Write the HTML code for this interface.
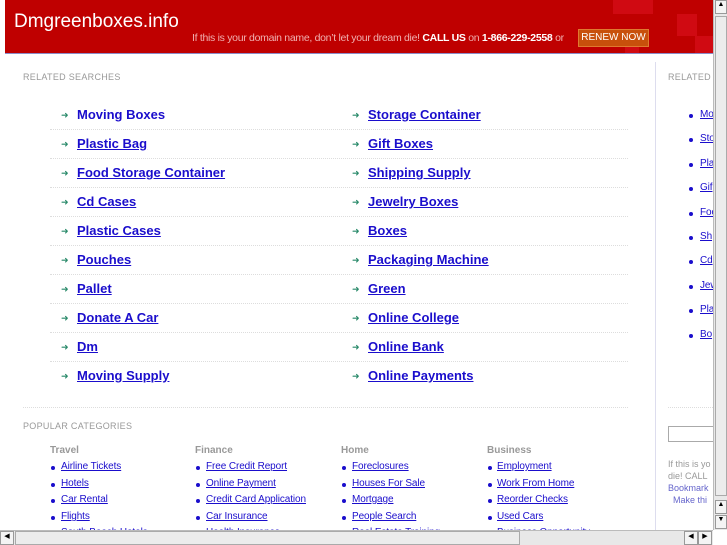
<!DOCTYPE html>
<html><head><style>
*{margin:0;padding:0;box-sizing:border-box}
body{width:727px;height:545px;overflow:hidden;background:#fff;font-family:"Liberation Sans",sans-serif;position:relative}
.hdr{position:absolute;left:5px;top:0;width:708px;height:54px;background:#bf0000;border-bottom:1px solid #8c8cc8;overflow:hidden}
.hdr .t{position:absolute;left:9px;top:11px;color:#fff;font-size:19px}
.hdr .m{position:absolute;left:187px;top:32px;color:#f0b0b0;font-size:10.5px;letter-spacing:-0.3px}
.hdr .m b{color:#fff;font-weight:bold}
.btn{position:absolute;left:573px;top:29px;width:71px;height:18px;background:#c8500c;border:1px solid #e07a30;color:#fff;font-size:10px;text-align:center;line-height:16px}
.sq{position:absolute;background:#d00a12}
.lbl{position:absolute;font-size:9px;color:#999;letter-spacing:0.3px}
.rs a{position:absolute;font-size:13px;font-weight:bold;color:#1a0dcc;text-decoration:none}
.rs a.u{text-decoration:underline}
.ar{position:absolute;color:#2a8a6a;font-size:9px}
.dot{position:absolute;left:50px;width:578px;border-top:1px dotted #ddd}
.pc h4{position:absolute;font-size:10px;color:#999;font-weight:bold}
.pc a{position:absolute;font-size:10px;color:#1a0dcc;text-decoration:underline;letter-spacing:-0.1px}
.b{position:absolute;width:4px;height:4px;border-radius:2px;background:#1a0dcc}
.vs{position:absolute;left:713px;top:0;width:14px;height:530px;background:#e8e8e8;border-left:1px solid #bbb}
.hs{position:absolute;left:0;top:530px;width:713px;height:15px;background:#e8e8e8;border-top:1px solid #bbb}
</style></head><body>
<div class="pc">
<b class="b" style="left:51px;top:532px"></b><a style="left:61px;top:527px">South Beach Hotels</a>
<b class="b" style="left:196px;top:532px"></b><a style="left:206px;top:527px">Health Insurance</a>
<b class="b" style="left:342px;top:532px"></b><a style="left:352px;top:527px">Real Estate Training</a>
<b class="b" style="left:488px;top:532px"></b><a style="left:497px;top:527px">Business Opportunity</a>
</div>
<div class="hdr">
<div class="sq" style="left:608px;top:0;width:40px;height:14px"></div>
<div class="sq" style="left:672px;top:14px;width:20px;height:22px"></div>
<div class="sq" style="left:690px;top:36px;width:18px;height:18px"></div>
<div class="sq" style="left:620px;top:44px;width:14px;height:10px"></div>
<div class="t">Dmgreenboxes.info</div>
<div class="m">If this is your domain name, don’t let your dream die! <b>CALL US</b> on <b>1-866-229-2558</b> or</div>
<div class="btn">RENEW NOW</div>
</div>
<div style="position:absolute;left:655px;top:62px;height:468px;border-left:1px solid #dde"></div>
<div class="lbl" style="left:23px;top:72px">RELATED SEARCHES</div>
<div class="lbl" style="left:668px;top:72px">RELATED</div>
<div class="rs">
<span class="ar" style="left:61px;top:110px">➜</span><a style="left:77px;top:107px">Moving Boxes</a>
<span class="ar" style="left:352px;top:110px">➜</span><a class="u" style="left:368px;top:107px">Storage Container</a>
<div class="dot" style="top:129px"></div>
<span class="ar" style="left:61px;top:139px">➜</span><a class="u" style="left:77px;top:136px">Plastic Bag</a>
<span class="ar" style="left:352px;top:139px">➜</span><a class="u" style="left:368px;top:136px">Gift Boxes</a>
<div class="dot" style="top:158px"></div>
<span class="ar" style="left:61px;top:168px">➜</span><a class="u" style="left:77px;top:165px">Food Storage Container</a>
<span class="ar" style="left:352px;top:168px">➜</span><a class="u" style="left:368px;top:165px">Shipping Supply</a>
<div class="dot" style="top:187px"></div>
<span class="ar" style="left:61px;top:197px">➜</span><a class="u" style="left:77px;top:194px">Cd Cases</a>
<span class="ar" style="left:352px;top:197px">➜</span><a class="u" style="left:368px;top:194px">Jewelry Boxes</a>
<div class="dot" style="top:216px"></div>
<span class="ar" style="left:61px;top:226px">➜</span><a class="u" style="left:77px;top:223px">Plastic Cases</a>
<span class="ar" style="left:352px;top:226px">➜</span><a class="u" style="left:368px;top:223px">Boxes</a>
<div class="dot" style="top:245px"></div>
<span class="ar" style="left:61px;top:255px">➜</span><a class="u" style="left:77px;top:252px">Pouches</a>
<span class="ar" style="left:352px;top:255px">➜</span><a class="u" style="left:368px;top:252px">Packaging Machine</a>
<div class="dot" style="top:274px"></div>
<span class="ar" style="left:61px;top:284px">➜</span><a class="u" style="left:77px;top:281px">Pallet</a>
<span class="ar" style="left:352px;top:284px">➜</span><a class="u" style="left:368px;top:281px">Green</a>
<div class="dot" style="top:303px"></div>
<span class="ar" style="left:61px;top:313px">➜</span><a class="u" style="left:77px;top:310px">Donate A Car</a>
<span class="ar" style="left:352px;top:313px">➜</span><a class="u" style="left:368px;top:310px">Online College</a>
<div class="dot" style="top:332px"></div>
<span class="ar" style="left:61px;top:342px">➜</span><a class="u" style="left:77px;top:339px">Dm</a>
<span class="ar" style="left:352px;top:342px">➜</span><a class="u" style="left:368px;top:339px">Online Bank</a>
<div class="dot" style="top:361px"></div>
<span class="ar" style="left:61px;top:371px">➜</span><a class="u" style="left:77px;top:368px">Moving Supply</a>
<span class="ar" style="left:352px;top:371px">➜</span><a class="u" style="left:368px;top:368px">Online Payments</a>
<div class="dot" style="top:407px;left:23px;width:605px"></div>
</div>
<div style="position:absolute;left:668px;top:407px;width:45px;border-top:1px dotted #ddd"></div>
<div class="pc" style="font-size:10px">
<b class="b" style="left:689px;top:114px"></b><a style="left:700px;top:109px">Mo</a>
<b class="b" style="left:689px;top:138px"></b><a style="left:700px;top:133px">Sto</a>
<b class="b" style="left:689px;top:163px"></b><a style="left:700px;top:158px">Pla</a>
<b class="b" style="left:689px;top:187px"></b><a style="left:700px;top:182px">Gif</a>
<b class="b" style="left:689px;top:212px"></b><a style="left:700px;top:207px">Foo</a>
<b class="b" style="left:689px;top:236px"></b><a style="left:700px;top:231px">Sh</a>
<b class="b" style="left:689px;top:260px"></b><a style="left:700px;top:255px">Cd</a>
<b class="b" style="left:689px;top:285px"></b><a style="left:700px;top:280px">Jew</a>
<b class="b" style="left:689px;top:309px"></b><a style="left:700px;top:304px">Pla</a>
<b class="b" style="left:689px;top:334px"></b><a style="left:700px;top:329px">Bo</a>
</div>
<div style="position:absolute;left:668px;top:426px;width:50px;height:16px;border:1px solid #aaa"></div>
<div style="position:absolute;left:668px;top:458px;font-size:9px;color:#999;line-height:12px">If this is yo<br>die! CALL<br><span style="color:#66c">Bookmark</span><br>&nbsp;&nbsp;<span style="color:#66c">Make thi</span></div>
<div class="lbl" style="left:23px;top:421px">POPULAR CATEGORIES</div>
<div class="pc">
<h4 style="left:50px;top:445px">Travel</h4>
<h4 style="left:195px;top:445px">Finance</h4>
<h4 style="left:341px;top:445px">Home</h4>
<h4 style="left:487px;top:445px">Business</h4>
<b class="b" style="left:51px;top:466px"></b><a style="left:61px;top:461px">Airline Tickets</a>
<b class="b" style="left:51px;top:483px"></b><a style="left:61px;top:478px">Hotels</a>
<b class="b" style="left:51px;top:499px"></b><a style="left:61px;top:494px">Car Rental</a>
<b class="b" style="left:51px;top:516px"></b><a style="left:61px;top:511px">Flights</a>
<b class="b" style="left:196px;top:466px"></b><a style="left:206px;top:461px">Free Credit Report</a>
<b class="b" style="left:196px;top:483px"></b><a style="left:206px;top:478px">Online Payment</a>
<b class="b" style="left:196px;top:499px"></b><a style="left:206px;top:494px">Credit Card Application</a>
<b class="b" style="left:196px;top:516px"></b><a style="left:206px;top:511px">Car Insurance</a>
<b class="b" style="left:342px;top:466px"></b><a style="left:352px;top:461px">Foreclosures</a>
<b class="b" style="left:342px;top:483px"></b><a style="left:352px;top:478px">Houses For Sale</a>
<b class="b" style="left:342px;top:499px"></b><a style="left:352px;top:494px">Mortgage</a>
<b class="b" style="left:342px;top:516px"></b><a style="left:352px;top:511px">People Search</a>
<b class="b" style="left:488px;top:466px"></b><a style="left:497px;top:461px">Employment</a>
<b class="b" style="left:488px;top:483px"></b><a style="left:497px;top:478px">Work From Home</a>
<b class="b" style="left:488px;top:499px"></b><a style="left:497px;top:494px">Reorder Checks</a>
<b class="b" style="left:488px;top:516px"></b><a style="left:497px;top:511px">Used Cars</a>
</div>
<div class="vs">
<div style="position:absolute;left:1px;top:0;width:12px;height:14px;border:1px solid #999;background:#f4f4f4;font-size:7px;text-align:center">▲</div>
<div style="position:absolute;left:1px;top:16px;width:12px;height:480px;border:1px solid #aaa;background:#ececec"></div>
<div style="position:absolute;left:1px;top:500px;width:12px;height:14px;border:1px solid #999;background:#f4f4f4;font-size:7px;text-align:center">▲</div>
<div style="position:absolute;left:1px;top:515px;width:12px;height:14px;border:1px solid #999;background:#f4f4f4;font-size:7px;text-align:center">▼</div>
</div>
<div class="hs">
<div style="position:absolute;left:0;top:0;width:14px;height:14px;border:1px solid #999;background:#f4f4f4;font-size:7px;text-align:center">◀</div>
<div style="position:absolute;left:15px;top:0;width:505px;height:14px;border:1px solid #aaa;background:#ececec"></div>
<div style="position:absolute;left:684px;top:0;width:14px;height:14px;border:1px solid #999;background:#f4f4f4;font-size:7px;text-align:center">◀</div>
<div style="position:absolute;left:698px;top:0;width:14px;height:14px;border:1px solid #999;background:#f4f4f4;font-size:7px;text-align:center">▶</div>
</div>
</body></html>
